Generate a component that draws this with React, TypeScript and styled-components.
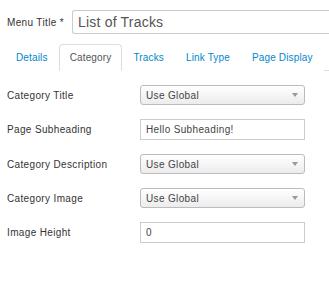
import styled, { createGlobalStyle } from 'styled-components';

const Global = createGlobalStyle`
    body {
        margin: 0;
        background: #fff;
        font-family: "Liberation Sans", Arial, sans-serif;
        overflow: hidden;
    }
`;

const Page = styled.div`
    width: 329px;
    height: 287px;
    overflow: hidden;
    color: #333;
`;

const TitleRow = styled.div`
    display: flex;
    align-items: center;
    padding: 10px 0 0 7px;
    gap: 8px;
`;

const TitleLabel = styled.label`
    font-size: 10px;
    letter-spacing: 0.35px;
    white-space: nowrap;
`;

const TitleInput = styled.div`
    flex: 1;
    height: 22px;
    border: 1px solid #ccc;
    border-right: none;
    border-radius: 3px 0 0 3px;
    font-size: 14px;
    letter-spacing: 0.2px;
    color: #555;
    line-height: 22px;
    padding-left: 5px;
`;

const Tabs = styled.div`
    display: flex;
    align-items: flex-end;
    margin: 10px 0 0 5px;
    height: 26px;
    border-bottom: 1px solid #ddd;
`;

const Tab = styled.div<{ $active?: boolean }>`
    height: 25px;
    line-height: 25px;
    padding: 0 10px;
    margin-bottom: -1px;
    white-space: nowrap;
    font-size: 10px;
    letter-spacing: 0.15px;
    color: ${p => (p.$active ? '#555' : '#0088cc')};
    border: 1px solid ${p => (p.$active ? '#ddd' : 'transparent')};
    border-bottom-color: ${p => (p.$active ? '#fff' : 'transparent')};
    border-radius: 4px 4px 0 0;
    background: #fff;
`;

const Form = styled.div`
    display: flex;
    flex-direction: column;
    gap: 14px;
    padding: 14px 0 0 7px;
`;

const Row = styled.div`
    display: flex;
    align-items: center;
`;

const Label = styled.label`
    width: 133px;
    font-size: 10px;
    letter-spacing: 0.35px;
`;

const Select = styled.div`
    width: 152px;
    height: 18px;
    border: 1px solid #bbb;
    border-radius: 3px;
    background: linear-gradient(#fff, #ececec);
    display: flex;
    align-items: center;
    justify-content: space-between;
    padding: 0 6px 0 5px;
    font-size: 10px;
    letter-spacing: 0.35px;
    color: #444;
`;

const Arrow = styled.span`
    width: 0;
    height: 0;
    border-left: 3px solid transparent;
    border-right: 3px solid transparent;
    border-top: 4px solid #999;
`;

const Input = styled.div`
    width: 153px;
    height: 19px;
    border: 1px solid #ccc;
    padding: 0 5px;
    line-height: 19px;
    font-size: 10px;
    letter-spacing: 0.35px;
    color: #444;
`;

function App() {
    return (
        <Page>
            <Global />
            <TitleRow>
                <TitleLabel>Menu Title *</TitleLabel>
                <TitleInput>List of Tracks</TitleInput>
            </TitleRow>
            <Tabs>
                <Tab>Details</Tab>
                <Tab $active>Category</Tab>
                <Tab>Tracks</Tab>
                <Tab>Link Type</Tab>
                <Tab>Page Display</Tab>
            </Tabs>
            <Form>
                <Row>
                    <Label>Category Title</Label>
                    <Select>Use Global<Arrow /></Select>
                </Row>
                <Row>
                    <Label>Page Subheading</Label>
                    <Input>Hello Subheading!</Input>
                </Row>
                <Row>
                    <Label>Category Description</Label>
                    <Select>Use Global<Arrow /></Select>
                </Row>
                <Row>
                    <Label>Category Image</Label>
                    <Select>Use Global<Arrow /></Select>
                </Row>
                <Row>
                    <Label>Image Height</Label>
                    <Input>0</Input>
                </Row>
            </Form>
        </Page>
    );
}

export default App;
